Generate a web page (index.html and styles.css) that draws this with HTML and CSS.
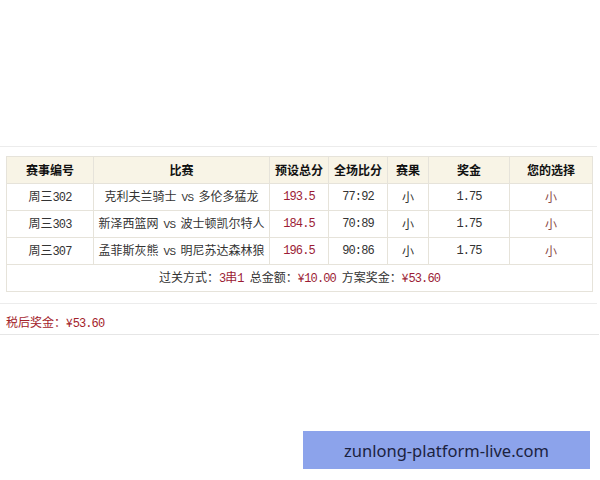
FILE: index.html
```html
<!DOCTYPE html>
<html lang="zh">
<head>
<meta charset="utf-8">
<link rel="stylesheet" href="styles.css">
</head>
<body>
<div class="page">
  <div class="panel">
    <table class="bets">
      <colgroup>
        <col class="c1"><col class="c2"><col class="c3"><col class="c4"><col class="c5"><col class="c6"><col class="c7">
      </colgroup>
      <thead>
        <tr><th>赛事编号</th><th>比赛</th><th>预设总分</th><th>全场比分</th><th>赛果</th><th>奖金</th><th>您的选择</th></tr>
      </thead>
      <tbody>
        <tr><td>周三<span class="num">302</span></td><td>克利夫兰骑士<span class="vs">VS</span>多伦多猛龙</td><td class="num red">193.5</td><td class="num">77:92</td><td>小</td><td class="num">1.75</td><td class="pick">小</td></tr>
        <tr><td>周三<span class="num">303</span></td><td>新泽西篮网<span class="vs">VS</span>波士顿凯尔特人</td><td class="num red">184.5</td><td class="num">70:89</td><td>小</td><td class="num">1.75</td><td class="pick">小</td></tr>
        <tr><td>周三<span class="num">307</span></td><td>孟菲斯灰熊<span class="vs">VS</span>明尼苏达森林狼</td><td class="num red">196.5</td><td class="num">90:86</td><td>小</td><td class="num">1.75</td><td class="pick">小</td></tr>
        <tr class="sum"><td colspan="7">过关方式：<span class="red num">3</span><span class="red">串</span><span class="red num">1</span><span class="gap"></span>总金额：<span class="red">¥<span class="num">10.00</span></span><span class="gap"></span>方案奖金：<span class="red">¥<span class="num">53.60</span></span></td></tr>
      </tbody>
    </table>
  </div>
  <div class="after">税后奖金：¥<span class="num">53.60</span></div>
</div>
<div class="watermark">zunlong-platform-live.com</div>
</body>
</html>
```
FILE: styles.css
```css
html, body {
  margin: 0;
  padding: 0;
  background: #fff;
}
body {
  width: 600px;
  height: 480px;
  position: relative;
  overflow: hidden;
  font-family: "Noto Sans CJK SC", "DejaVu Sans", sans-serif;
  font-size: 12px;
  color: #222;
}
.page {
  padding-top: 146px;
}
.panel {
  border-top: 1px solid #ececec;
  border-bottom: 1px solid #ececec;
  padding: 9px 0 11px 6px;
  margin-right: 3px;
}
.bets {
  border-collapse: collapse;
  width: 586px;
  table-layout: fixed;
  border: 1px solid #dedbd2;
}
.c1 { width: 87px; }
.c2 { width: 176px; }
.c3 { width: 59px; }
.c4 { width: 59px; }
.c5 { width: 41px; }
.c6 { width: 81px; }
.c7 { width: 83px; }
.bets th, .bets td {
  border: 1px solid #e6e3da;
  text-align: center;
  padding: 0;
  white-space: nowrap;
  line-height: 16px;
}
.bets th {
  background: #f8f4e6;
  height: 26px;
  font-weight: bold;
  color: #111;
}
.bets td {
  height: 26px;
  color: #333;
}
.bets tr.sum td {
  height: 26px;
}
.num {
  font-family: "Liberation Mono", "DejaVu Sans Mono", monospace;
  font-size: 12px;
  letter-spacing: -0.9px;
}
.vs {
  font-family: "Liberation Mono", "DejaVu Sans Mono", monospace;
  font-size: 11px;
  letter-spacing: -0.5px;
  margin: 0 5px;
}
.gap {
  display: inline-block;
  width: 6px;
}
.red {
  color: #9b1c35;
}
.bets td.red {
  color: #9b1c35;
}
.bets td.pick {
  color: #8a4a48;
}
.after {
  border-bottom: 1px solid #e6e6e6;
  padding: 10px 0 2px 6px;
  line-height: 16px;
  color: #a3222a;
  margin-right: 1px;
}
.watermark {
  position: absolute;
  left: 303px;
  top: 431px;
  width: 287px;
  height: 38px;
  background: #8ca3eb;
  color: #1b2240;
  font-family: "Noto Sans", "DejaVu Sans", sans-serif;
  font-size: 16.5px;
  display: flex;
  align-items: center;
  justify-content: center;
}
```
